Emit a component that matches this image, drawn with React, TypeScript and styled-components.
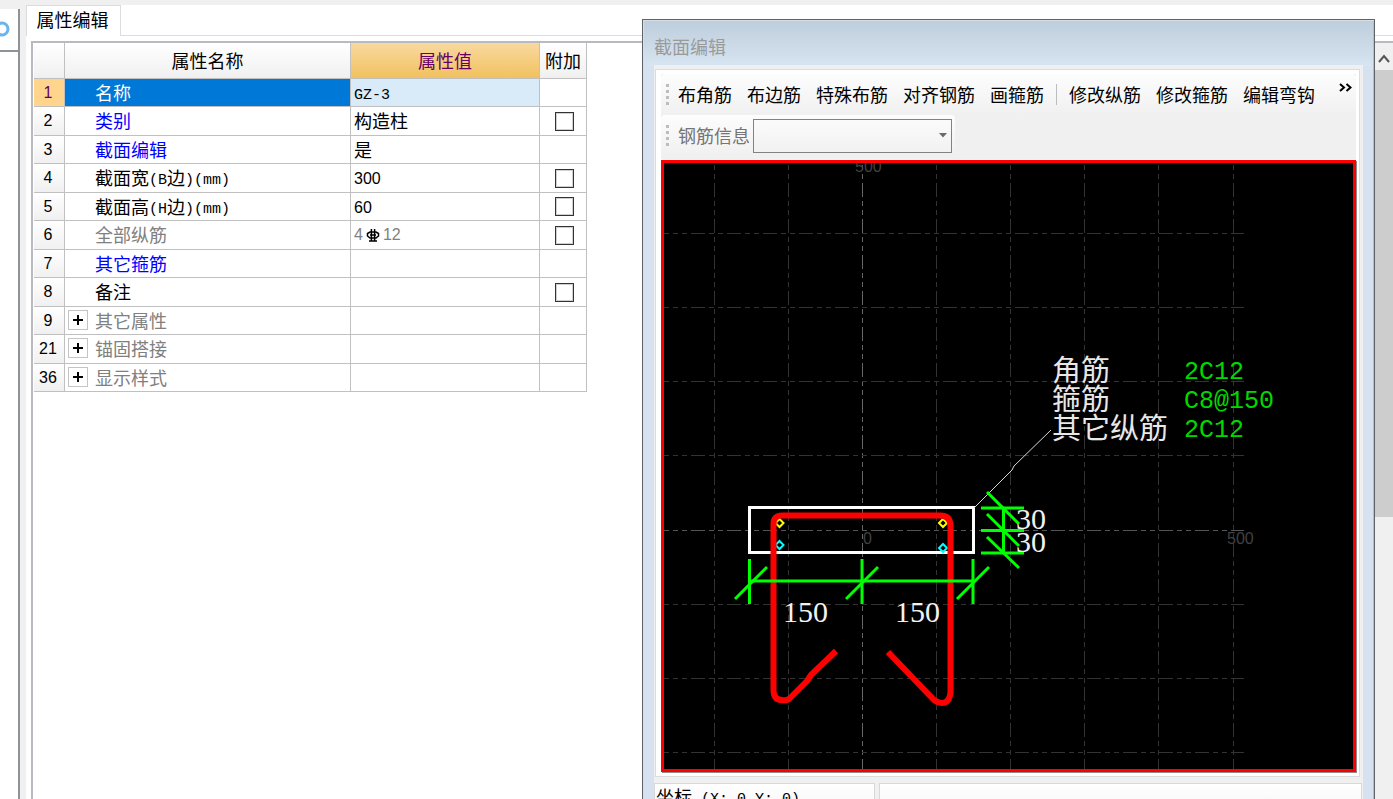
import React from "react";
import styled, { createGlobalStyle } from "styled-components";

const GlobalStyle = createGlobalStyle`
  *, *::before, *::after { box-sizing: border-box; }
  body {
    margin: 0;
    background: #f0f0f0;
    color: #000;
    font: 18px/24px "Noto Sans CJK SC", sans-serif;
  }
  button, input, select { font: inherit; color: inherit; }
`;

const Page = styled.div`
  position: relative;
  display: flex;
  flex-direction: column;
  height: 100vh;
  overflow: hidden;
`;

const TopStrip = styled.div`
  flex: none;
  height: 5px;
  background: #f0f0f0;
`;

const Workspace = styled.main`
  flex: 1;
  display: flex;
  min-height: 0;
`;

const DockEdge = styled.aside`
  flex: none;
  display: flex;
  flex-direction: column;
  width: 20px;
  margin-top: 4px;
  background: #fff;
  border-right: 2px solid #8e9299;
`;

const DockHeader = styled.div`
  height: 43px;
  padding-top: 12px;
  border-bottom: 2px solid #8e9299;
  overflow: hidden;

  svg { display: block; }
`;

const PropertyPanel = styled.section`
  flex: 1;
  display: flex;
  flex-direction: column;
  min-width: 0;
  margin-left: 6px;
  background: #fff;
`;

const TabBar = styled.div`
  display: flex;
  height: 31px;

  &::after {
    content: "";
    flex: 1;
    border-bottom: 1px solid #dcdcdc;
  }
`;

const Tab = styled.button`
  width: 95px;
  padding: 0 2px 4px 0;
  border: 1px solid #dcdcdc;
  border-bottom: 0;
  background: #fff;
`;

const GridFrame = styled.div`
  flex: 1;
  display: flex;
  justify-content: space-between;
  align-items: stretch;
  min-height: 0;
  margin: 5px 0 0 5px;
  padding-left: 1px;
  border: 1px solid #b9b9c0;
  border-width: 2px 0 0 2px;
`;

const PropertyTable = styled.table`
  align-self: flex-start;
  flex: none;
  width: 553px;
  table-layout: fixed;
  border-collapse: separate;
  border-spacing: 0;
`;

const HeadCell = styled.th<{ $active?: boolean }>`
  height: 36px;
  padding: 0 0 2px;
  font-weight: 400;
  line-height: 24px;
  color: ${(p) => (p.$active ? "#660066" : "#000")};
  background: ${(p) =>
    p.$active
      ? "linear-gradient(#f9d99f, #f1c15f)"
      : "linear-gradient(#ffffff, #f0f0f0)"};
  border: 1px solid #c0c0c0;
  border-width: 0 1px 1px 0;
`;

const Row = styled.tr`
  height: 28px;
  &:nth-child(even) { height: 29px; }
`;

const IndexCell = styled.th<{ $active?: boolean }>`
  padding: 0 2px 0 0;
  text-align: center;
  font: 400 16px/22px "Liberation Sans", sans-serif;
  color: ${(p) => (p.$active ? "#660066" : "#000")};
  background: ${(p) => (p.$active ? "#ffd58d" : "linear-gradient(#fff, #f0f0f0)")};
  border: 1px solid #c0c0c0;
  border-width: 0 1px 1px 0;
`;

const Cell = styled.td<{ $bg?: string; $color?: string }>`
  padding: 0 0 2px 3px;
  line-height: 22px;
  white-space: nowrap;
  color: ${(p) => p.$color ?? "#000"};
  background: ${(p) => p.$bg ?? "#fff"};
  border: 1px solid #c0c0c0;
  border-width: 0 1px 1px 0;
`;

const NameContent = styled.div`
  display: flex;
  align-items: center;
  gap: 7px;
  height: 22px;
`;

const ExpandSlot = styled.span`
  flex: none;
  width: 20px;
  height: 19px;
`;

const ExpandButton = styled.button`
  flex: none;
  display: grid;
  place-items: center;
  width: 20px;
  height: 20px;
  padding: 0;
  border: 1px solid #c4c4c4;
  background: #fff;
  color: #000;
`;

const Latin = styled.span`
  font: 15px/15px "Liberation Mono", monospace;
  vertical-align: 1px;
`;

const Digits = styled.span`
  font: 16px/16px "Liberation Sans", sans-serif;
  vertical-align: 1px;
`;

const RebarValue = styled.span`
  display: flex;
  align-items: center;
  gap: 3px;
  height: 22px;
  padding-top: 2px;
`;

const CheckCell = styled(Cell)`
  padding: 0 0 0 2px;
`;

const Check = styled.input`
  appearance: none;
  display: block;
  width: 19px;
  height: 19px;
  margin: 0 auto;
  border: 1px solid #333;
  outline: 1px solid #d0d0d0;
  outline-offset: -2px;
  background: #fff;
`;

const ScrollBar = styled.div`
  width: 18px;
  flex: none;
  background: #f0f0f0;
`;

const ScrollUp = styled.button`
  display: grid;
  place-items: center;
  width: 18px;
  height: 27px;
  padding: 4px 0 0;
  border: 0;
  background: #f0f0f0;
`;

const ScrollThumb = styled.div`
  height: 447px;
  background: #cdcdcd;
`;

const EditorWindow = styled.section`
  position: absolute;
  top: 19px;
  left: 642px;
  right: 18px;
  padding: 0 12px;
  border: 1px solid #5f6266;
  border-width: 1px 1px 0 1px;
  box-shadow: inset 1px 1px 0 #d9dde4, inset -1px 0 0 #b8bcc4;
  background: linear-gradient(#becddb, #d7e4f2 46px, #d7e2f0 46px);
`;

const WindowTitle = styled.h1`
  height: 45px;
  margin: 0 -1px;
  padding-top: 14px;
  font-size: 18px;
  font-weight: 400;
  line-height: 24px;
  color: #9a9a9a;
`;

const WindowBody = styled.div`
  display: flex;
  flex-direction: column;
  background: #f0f0f0;
  margin: 0 -1px;
  padding-top: 4px;
`;

const Sheet = styled.div`
  margin: 0 3px 6px 1px;
  padding: 4px 3px 4px 5px;
  border: 1px solid #dcdcdc;
  background: #fff;
`;

const ToolArea = styled.div`
  background: #f0f0f0;
  padding-bottom: 3px;
  border-bottom: 1px solid #f8f8f8;
`;

const ToolRow = styled.div<{ $short?: boolean }>`
  display: flex;
  align-items: center;
  width: ${(p) => (p.$short ? "294px" : "auto")};
  height: 41px;
  padding-left: 5px;
  border-radius: 4px;
  background: linear-gradient(#fdfdfd, #f0f0f0);
`;

const Grip = styled.span`
  flex: none;
  width: 3px;
  height: 21px;
  margin-right: 9px;
  background: repeating-linear-gradient(#bdbdbd 0 3px, transparent 3px 6px);
`;

const Tools = styled.div`
  display: flex;
  align-items: center;
  gap: 15px;
`;

const ToolButton = styled.button`
  flex: none;
  padding: 0 0 2px;
  border: 0;
  background: none;
  line-height: 24px;
`;

const Separator = styled.span`
  width: 1px;
  height: 21px;
  margin: 0 -3px;
  background: #bcbcbc;
`;

const MoreButton = styled.button`
  display: block;
  margin: 0 4px 15px auto;
  padding: 0;
  border: 0;
  background: none;

  svg { display: block; }
`;

const InfoLabel = styled.label`
  margin-right: 3px;
  padding-bottom: 2px;
  color: #757575;
`;

const SelectWrap = styled.span`
  display: grid;
  align-items: center;
  width: 199px;

  > * { grid-area: 1 / 1; }
  svg { justify-self: end; margin-right: 5px; pointer-events: none; }
`;

const InfoSelect = styled.select`
  appearance: none;
  width: 100%;
  height: 34px;
  margin: 0;
  border: 1px solid #828282;
  border-radius: 0;
  background: transparent;
  opacity: 1;
`;

const Canvas = styled.div`
  border: 3px solid #f00;
  background: #000;
  box-shadow: 1px 1px 0 #8c8c8c;

  svg { display: block; width: 100%; height: auto; }
`;

const StatusBar = styled.footer`
  display: flex;
  gap: 4px;
  height: 40px;
  padding-right: 1px;
`;

const StatusCell = styled.div<{ $wide?: boolean }>`
  flex: ${(p) => (p.$wide ? "1" : "none")};
  width: ${(p) => (p.$wide ? "auto" : "221px")};
  padding-left: 1px;
  border: 1px solid #d8d8d8;
  background: linear-gradient(#fff, #f2f2f2);
  line-height: 24px;
  white-space: pre;
`;

const GRAY = "#808080";
const BLUE = "#0000ff";

type PropertyRow = {
  no: number;
  label: string;
  name: React.ReactNode;
  value?: React.ReactNode;
  color?: string;
  check?: boolean;
  group?: boolean;
};

function RebarMark() {
  return (
    <svg width="14" height="15" viewBox="0 0 14 15" fill="none" stroke="#000" strokeWidth="1.5" aria-label="HRB400">
      <path d="M4 4H10L12.5 5.5V8L10 10H4L1.5 8V5.5Z M5.4 1V13 M8.6 1V13 M4 7H10 M3 13H11" />
    </svg>
  );
}

const rows: PropertyRow[] = [
  { no: 1, label: "名称", name: "名称", value: <Latin>GZ-3</Latin>, color: "#fff" },
  { no: 2, label: "类别", name: "类别", value: "构造柱", color: BLUE, check: true },
  { no: 3, label: "截面编辑", name: "截面编辑", value: "是", color: BLUE },
  {
    no: 4,
    label: "截面宽",
    name: <span>截面宽<Latin>(B</Latin>边<Latin>)(mm)</Latin></span>,
    value: <Digits>300</Digits>,
    check: true,
  },
  {
    no: 5,
    label: "截面高",
    name: <span>截面高<Latin>(H</Latin>边<Latin>)(mm)</Latin></span>,
    value: <Digits>60</Digits>,
    check: true,
  },
  {
    no: 6,
    label: "全部纵筋",
    name: "全部纵筋",
    value: <RebarValue><Digits>4</Digits><RebarMark /><Digits>12</Digits></RebarValue>,
    color: GRAY,
    check: true,
  },
  { no: 7, label: "其它箍筋", name: "其它箍筋", color: BLUE },
  { no: 8, label: "备注", name: "备注", check: true },
  { no: 9, label: "其它属性", name: "其它属性", color: GRAY, group: true },
  { no: 21, label: "锚固搭接", name: "锚固搭接", color: GRAY, group: true },
  { no: 36, label: "显示样式", name: "显示样式", color: GRAY, group: true },
];

const IndexCol = styled.col`width: 31px;`;
const NameCol = styled.col`width: 286px;`;
const ValueCol = styled.col`width: 189px;`;
const ExtraCol = styled.col`width: 47px;`;

function Properties() {
  return (
    <PropertyTable>
      <colgroup>
        <IndexCol />
        <NameCol />
        <ValueCol />
        <ExtraCol />
      </colgroup>
      <thead>
        <tr>
          <HeadCell />
          <HeadCell>属性名称</HeadCell>
          <HeadCell $active>属性值</HeadCell>
          <HeadCell>附加</HeadCell>
        </tr>
      </thead>
      <tbody>
        {rows.map((r) => {
          const selected = r.no === 1;
          return (
            <Row key={r.no}>
              <IndexCell $active={selected}>{r.no}</IndexCell>
              <Cell $bg={selected ? "#0078d7" : undefined} $color={r.color}>
                <NameContent>
                  {r.group ? (
                    <ExpandButton aria-label={"展开" + r.label}>
                      <svg width="12" height="12" stroke="#000" strokeWidth="2">
                        <path d="M1 6H11M6 1V11" />
                      </svg>
                    </ExpandButton>
                  ) : (
                    <ExpandSlot />
                  )}
                  {r.name}
                </NameContent>
              </Cell>
              <Cell
                $bg={selected ? "#d9eaf9" : undefined}
                $color={r.color === GRAY ? GRAY : "#000"}
              >
                {r.value}
              </Cell>
              <CheckCell>
                {r.check && <Check type="checkbox" aria-label={"附加 " + r.label} />}
              </CheckCell>
            </Row>
          );
        })}
      </tbody>
    </PropertyTable>
  );
}

const gridX = [714, 788, 936, 1010, 1084, 1158, 1233];
const gridY = [234, 308, 382, 456, 605, 679, 753];

function SectionDrawing() {
  const serif = '"Liberation Serif", serif';
  const mono = '"Liberation Mono", monospace';
  const cjk = '"Noto Sans CJK SC", sans-serif';
  return (
    <svg viewBox="664 163 689 606" fill="none">
      <g strokeDasharray="14 4 5 4 5 4" stroke="#333">
        <g strokeDashoffset="16">
          {gridX.map((x) => (
            <path key={x} d={`M${x + 0.5} 163V769`} />
          ))}
          <path d="M862.5 163V769" stroke="#666" />
        </g>
        <g strokeDashoffset="9">
          {gridY.map((y) => (
            <path key={y} d={`M664 ${y - 0.5}H1244`} />
          ))}
          <path d="M664 530.5H1244" stroke="#555" />
        </g>
      </g>
      <g fill="#414141" fontFamily='"Liberation Sans", sans-serif' fontSize="16">
        <text x="855" y="172">500</text>
        <text x="1227" y="544">500</text>
        <text x="863" y="544">0</text>
      </g>

      <rect x="749.5" y="507.5" width="224" height="45" stroke="#fff" strokeWidth="3" />
      <path d="M974 508L1012 470L1014 466L1051 430" stroke="#d8d8d8" />

      <g strokeWidth="2">
        <g stroke="#ff0">
          <path d="M779.5 519L783.5 523L779.5 527L775.5 523Z" />
          <path d="M943 519L947 523L943 527L939 523Z" />
        </g>
        <g stroke="#0ff">
          <path d="M779.5 541L783.5 545L779.5 549L775.5 545Z" />
          <path d="M943 544L947 548L943 552L939 548Z" />
        </g>
      </g>
      <path
        d="M836 651L811 675L807 681L789 699Q786 701 782 700Q774 700 773.5 691V525Q773 515 783 515.5H939Q950 515 950.5 525V693Q949 703 942 703Q938 703 934 700L888 652"
        stroke="#f00"
        strokeWidth="6"
        strokeLinejoin="round"
      />

      <g stroke="#0f0" strokeWidth="3">
        <path d="M749.5 559V604M862 559V604M973 559V604M749.5 581H973" />
        <path d="M735 599L767 567M846 599L878 567M957 599L989 567" />
        <path d="M981 508H1024M981 530.5H1024M981 553H1024" />
        <path d="M1003.5 508V553" />
        <path d="M987 492L1019 524M987 514L1019 546M987 537L1019 568" />
      </g>

      <g fill="#f2f2f2" fontFamily={serif} fontSize="30">
        <text x="783" y="622">150</text>
        <text x="895" y="622">150</text>
        <text x="1016" y="529">30</text>
        <text x="1016" y="552">30</text>
      </g>
      <g fill="#e8e8e8" fontFamily={cjk} fontSize="29">
        <text x="1052" y="381">角筋</text>
        <text x="1052" y="410">箍筋</text>
        <text x="1052" y="439">其它纵筋</text>
      </g>
      <g fill="#00d800" fontFamily={mono} fontSize="25">
        <text x="1184" y="379">2C12</text>
        <text x="1184" y="408">C8@150</text>
        <text x="1184" y="437">2C12</text>
      </g>
    </svg>
  );
}

function SectionEditor() {
  return (
    <EditorWindow>
      <WindowTitle>截面编辑</WindowTitle>
      <WindowBody>
        <Sheet>
          <ToolArea>
            <ToolRow>
              <Grip />
              <Tools>
                <ToolButton>布角筋</ToolButton>
                <ToolButton>布边筋</ToolButton>
                <ToolButton>特殊布筋</ToolButton>
                <ToolButton>对齐钢筋</ToolButton>
                <ToolButton>画箍筋</ToolButton>
                <Separator />
                <ToolButton>修改纵筋</ToolButton>
                <ToolButton>修改箍筋</ToolButton>
                <ToolButton>编辑弯钩</ToolButton>
              </Tools>
              <MoreButton aria-label="更多">
                <svg width="13" height="9" fill="none" stroke="#000" strokeWidth="2">
                  <path d="M1 1L5 4.5L1 8M7.5 1L11.5 4.5L7.5 8" />
                </svg>
              </MoreButton>
            </ToolRow>
            <ToolRow $short>
              <Grip />
              <InfoLabel htmlFor="rebar-info">钢筋信息</InfoLabel>
              <SelectWrap>
                <InfoSelect id="rebar-info" />
                <svg width="8" height="5" fill="#6a6a6a"><path d="M0 0H8L4 4.5Z" /></svg>
              </SelectWrap>
            </ToolRow>
          </ToolArea>
          <Canvas><SectionDrawing /></Canvas>
        </Sheet>
        <StatusBar>
          <StatusCell>坐标<Latin> (X: 0 Y: 0)</Latin></StatusCell>
          <StatusCell $wide />
        </StatusBar>
      </WindowBody>
    </EditorWindow>
  );
}

export default function App() {
  return (
    <Page>
      <GlobalStyle />
      <TopStrip />
      <Workspace>
        <DockEdge>
          <DockHeader>
            <svg width="10" height="16" fill="none" stroke="#6bb5ec" strokeWidth="3">
              <circle cx="2" cy="8" r="6" />
            </svg>
          </DockHeader>
        </DockEdge>
        <PropertyPanel>
          <TabBar><Tab>属性编辑</Tab></TabBar>
          <GridFrame>
            <Properties />
            <ScrollBar>
              <ScrollUp aria-label="向上滚动">
                <svg width="12" height="9" fill="none" stroke="#555" strokeWidth="2">
                  <path d="M1 8L6 2L11 8" />
                </svg>
              </ScrollUp>
              <ScrollThumb />
            </ScrollBar>
          </GridFrame>
        </PropertyPanel>
      </Workspace>
      <SectionEditor />
    </Page>
  );
}
